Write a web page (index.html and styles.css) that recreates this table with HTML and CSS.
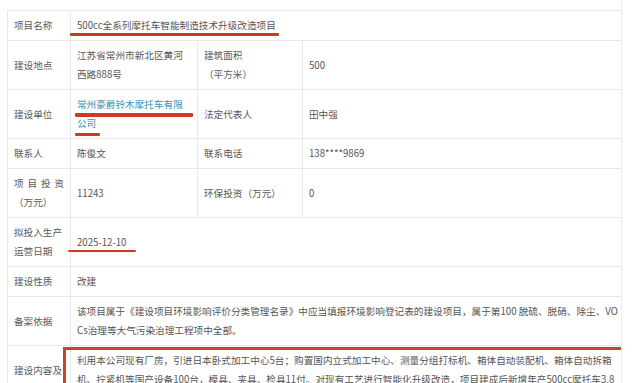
FILE: index.html
```html
<!DOCTYPE html>
<html lang="zh-CN">
<head>
<meta charset="utf-8">
<title>项目信息</title>
<link rel="stylesheet" href="styles.css">
</head>
<body>
<div class="page">
  <table class="info">
    <colgroup>
      <col class="c1"><col class="c2"><col class="c3"><col class="c4">
    </colgroup>
    <tr class="r1">
      <th>项目名称</th>
      <td colspan="3"><span class="mark mark-title">500cc全系列摩托车智能制造技术升级改造项目</span></td>
    </tr>
    <tr>
      <th>建设地点</th>
      <td>江苏省常州市新北区黄河西路888号</td>
      <th><span class="blk">建筑面积</span><span class="blk">（平方米）</span></th>
      <td>500</td>
    </tr>
    <tr>
      <th>建设单位</th>
      <td><div class="unit"><span class="link">常州豪爵铃木摩托车有限公司</span><i class="bar bar-a"></i><i class="bar bar-b"></i></div></td>
      <th>法定代表人</th>
      <td>田中强</td>
    </tr>
    <tr>
      <th>联系人</th>
      <td>陈俊文</td>
      <th>联系电话</th>
      <td>138****9869</td>
    </tr>
    <tr>
      <th><span class="blk just">项目投资</span><span class="blk">（万元）</span></th>
      <td>11243</td>
      <th>环保投资（万元）</th>
      <td>0</td>
    </tr>
    <tr>
      <th>拟投入生产运营日期</th>
      <td colspan="3"><span class="mark mark-date">2025-12-10</span></td>
    </tr>
    <tr>
      <th>建设性质</th>
      <td colspan="3">改建</td>
    </tr>
    <tr>
      <th>备案依据</th>
      <td colspan="3" class="para">该项目属于《建设项目环境影响评价分类管理名录》中应当填报环境影响登记表的建设项目，属于第100 脱硫、脱硝、除尘、VOCs治理等大气污染治理工程项中全部。</td>
    </tr>
    <tr>
      <th>建设内容及规模</th>
      <td colspan="3" class="para">利用本公司现有厂房，引进日本卧式加工中心5台；购置国内立式加工中心、测量分组打标机、箱体自动装配机、箱体自动拆箱机、拧紧机等国产设备100台，模具、夹具、检具11付。对现有工艺进行智能化升级改造，项目建成后新增年产500cc摩托车3.8万辆的生产能力。</td>
    </tr>
  </table>
  <div class="box"></div>
</div>
</body>
</html>
```

FILE: styles.css
```css
html, body {
  margin: 0;
  padding: 0;
  background: #fff;
}

.page {
  position: relative;
  width: 622px;
  height: 383px;
  padding: 10px 0 0 7px;
  box-sizing: border-box;
  border-right: 1px solid #ececec;
  overflow: hidden;
  font-family: "Noto Sans CJK SC", "Noto Sans", sans-serif;
  font-size: 9.64px;
  line-height: 19px;
  color: #555;
}

.info {
  width: 618px;
  table-layout: fixed;
  border-collapse: collapse;
}

.c1 { width: 63px; }
.c2 { width: 127px; }
.c3 { width: 105px; }
.c4 { width: 323px; }

.info th,
.info td {
  border: 1px solid #e8e8e8;
  padding: 5px 6px;
  text-align: left;
  vertical-align: middle;
  font-weight: normal;
  word-break: break-all;
}

.info th {
  color: #5a5a5a;
}

.info td {
  color: #555;
}

.blk {
  display: block;
}

.just {
  text-align: justify;
  text-align-last: justify;
}

.link {
  color: #3a8fb8;
}

.mark {
  position: relative;
  display: inline-block;
}

.mark::after {
  content: "";
  position: absolute;
  background: #cc3a22;
  border-radius: 1px;
}

.mark-title::after {
  left: -7px;
  right: -3px;
  top: 17px;
  height: 2.5px;
}

.mark-date::after {
  left: -9px;
  right: -10px;
  top: 17px;
  height: 2.5px;
}

.unit {
  position: relative;
}

.bar {
  position: absolute;
  left: -2px;
  background: #cc3a22;
  border-radius: 1px;
}

.bar-a {
  top: 18px;
  width: 118px;
  height: 4px;
}

.bar-b {
  top: 38px;
  width: 25px;
  height: 3px;
}

.box {
  position: absolute;
  left: 63px;
  top: 347px;
  width: 566px;
  height: 70px;
  box-sizing: border-box;
  border: 3px solid #c8432a;
}
```
